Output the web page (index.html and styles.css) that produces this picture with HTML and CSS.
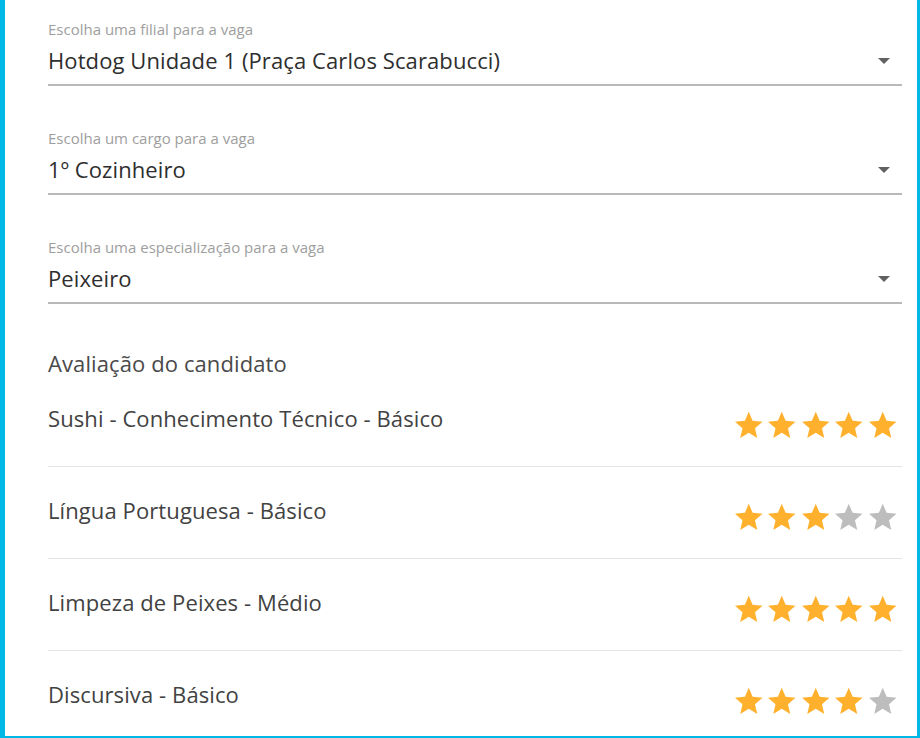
FILE: index.html
```html
<!DOCTYPE html>
<html lang="pt-BR">
<head>
<meta charset="utf-8">
<title>Vaga</title>
<link rel="stylesheet" href="styles.css">
</head>
<body>
<div class="frame">
  <div class="field">
    <div class="label">Escolha uma filial para a vaga</div>
    <div class="select"><span class="value">Hotdog Unidade 1 (Praça Carlos Scarabucci)</span><span class="arrow"></span></div>
  </div>
  <div class="field">
    <div class="label">Escolha um cargo para a vaga</div>
    <div class="select"><span class="value">1º Cozinheiro</span><span class="arrow"></span></div>
  </div>
  <div class="field">
    <div class="label">Escolha uma especialização para a vaga</div>
    <div class="select"><span class="value">Peixeiro</span><span class="arrow"></span></div>
  </div>

  <h2 class="section-title">Avaliação do candidato</h2>

  <div class="rows">
    <div class="row">
      <span class="skill">Sushi - Conhecimento Técnico - Básico</span>
      <div class="stars">
        <svg class="star on" viewBox="0 0 24 24"><path d="M12 17.27L18.18 21l-1.64-7.03L22 9.24l-7.19-.61L12 2 9.19 8.63 2 9.24l5.46 4.73L5.82 21z"/></svg>
        <svg class="star on" viewBox="0 0 24 24"><path d="M12 17.27L18.18 21l-1.64-7.03L22 9.24l-7.19-.61L12 2 9.19 8.63 2 9.24l5.46 4.73L5.82 21z"/></svg>
        <svg class="star on" viewBox="0 0 24 24"><path d="M12 17.27L18.18 21l-1.64-7.03L22 9.24l-7.19-.61L12 2 9.19 8.63 2 9.24l5.46 4.73L5.82 21z"/></svg>
        <svg class="star on" viewBox="0 0 24 24"><path d="M12 17.27L18.18 21l-1.64-7.03L22 9.24l-7.19-.61L12 2 9.19 8.63 2 9.24l5.46 4.73L5.82 21z"/></svg>
        <svg class="star on" viewBox="0 0 24 24"><path d="M12 17.27L18.18 21l-1.64-7.03L22 9.24l-7.19-.61L12 2 9.19 8.63 2 9.24l5.46 4.73L5.82 21z"/></svg>
      </div>
    </div>
    <div class="row">
      <span class="skill">Língua Portuguesa - Básico</span>
      <div class="stars">
        <svg class="star on" viewBox="0 0 24 24"><path d="M12 17.27L18.18 21l-1.64-7.03L22 9.24l-7.19-.61L12 2 9.19 8.63 2 9.24l5.46 4.73L5.82 21z"/></svg>
        <svg class="star on" viewBox="0 0 24 24"><path d="M12 17.27L18.18 21l-1.64-7.03L22 9.24l-7.19-.61L12 2 9.19 8.63 2 9.24l5.46 4.73L5.82 21z"/></svg>
        <svg class="star on" viewBox="0 0 24 24"><path d="M12 17.27L18.18 21l-1.64-7.03L22 9.24l-7.19-.61L12 2 9.19 8.63 2 9.24l5.46 4.73L5.82 21z"/></svg>
        <svg class="star off" viewBox="0 0 24 24"><path d="M12 17.27L18.18 21l-1.64-7.03L22 9.24l-7.19-.61L12 2 9.19 8.63 2 9.24l5.46 4.73L5.82 21z"/></svg>
        <svg class="star off" viewBox="0 0 24 24"><path d="M12 17.27L18.18 21l-1.64-7.03L22 9.24l-7.19-.61L12 2 9.19 8.63 2 9.24l5.46 4.73L5.82 21z"/></svg>
      </div>
    </div>
    <div class="row">
      <span class="skill">Limpeza de Peixes - Médio</span>
      <div class="stars">
        <svg class="star on" viewBox="0 0 24 24"><path d="M12 17.27L18.18 21l-1.64-7.03L22 9.24l-7.19-.61L12 2 9.19 8.63 2 9.24l5.46 4.73L5.82 21z"/></svg>
        <svg class="star on" viewBox="0 0 24 24"><path d="M12 17.27L18.18 21l-1.64-7.03L22 9.24l-7.19-.61L12 2 9.19 8.63 2 9.24l5.46 4.73L5.82 21z"/></svg>
        <svg class="star on" viewBox="0 0 24 24"><path d="M12 17.27L18.18 21l-1.64-7.03L22 9.24l-7.19-.61L12 2 9.19 8.63 2 9.24l5.46 4.73L5.82 21z"/></svg>
        <svg class="star on" viewBox="0 0 24 24"><path d="M12 17.27L18.18 21l-1.64-7.03L22 9.24l-7.19-.61L12 2 9.19 8.63 2 9.24l5.46 4.73L5.82 21z"/></svg>
        <svg class="star on" viewBox="0 0 24 24"><path d="M12 17.27L18.18 21l-1.64-7.03L22 9.24l-7.19-.61L12 2 9.19 8.63 2 9.24l5.46 4.73L5.82 21z"/></svg>
      </div>
    </div>
    <div class="row">
      <span class="skill">Discursiva - Básico</span>
      <div class="stars">
        <svg class="star on" viewBox="0 0 24 24"><path d="M12 17.27L18.18 21l-1.64-7.03L22 9.24l-7.19-.61L12 2 9.19 8.63 2 9.24l5.46 4.73L5.82 21z"/></svg>
        <svg class="star on" viewBox="0 0 24 24"><path d="M12 17.27L18.18 21l-1.64-7.03L22 9.24l-7.19-.61L12 2 9.19 8.63 2 9.24l5.46 4.73L5.82 21z"/></svg>
        <svg class="star on" viewBox="0 0 24 24"><path d="M12 17.27L18.18 21l-1.64-7.03L22 9.24l-7.19-.61L12 2 9.19 8.63 2 9.24l5.46 4.73L5.82 21z"/></svg>
        <svg class="star on" viewBox="0 0 24 24"><path d="M12 17.27L18.18 21l-1.64-7.03L22 9.24l-7.19-.61L12 2 9.19 8.63 2 9.24l5.46 4.73L5.82 21z"/></svg>
        <svg class="star off" viewBox="0 0 24 24"><path d="M12 17.27L18.18 21l-1.64-7.03L22 9.24l-7.19-.61L12 2 9.19 8.63 2 9.24l5.46 4.73L5.82 21z"/></svg>
      </div>
    </div>
  </div>
</div>
</body>
</html>
```

FILE: styles.css
```css
* { box-sizing: border-box; }
html, body {
  margin: 0;
  padding: 0;
  background: #ffffff;
}
body {
  width: 920px;
  height: 738px;
  overflow: hidden;
  font-family: "Open Sans", "Noto Sans", sans-serif;
}
.frame {
  height: 738px;
  border-left: 5px solid #00b8e6;
  border-right: 3px solid #00b8e6;
  border-bottom: 2px solid #00b8e6;
  padding: 0 15px 0 43px;
  overflow: hidden;
}
.field {
  padding-top: 19px;
}
.field + .field {
  padding-top: 42px;
}
.label {
  font-size: 15px;
  line-height: 20px;
  color: #9e9e9e;
}
.select {
  display: flex;
  align-items: center;
  justify-content: space-between;
  margin-top: 6px;
  padding-bottom: 9px;
  border-bottom: 2px solid #b9b9b9;
}
.value {
  font-size: 22px;
  line-height: 30px;
  letter-spacing: 0.1px;
  color: #2e2e2e;
}
.arrow {
  width: 0;
  height: 0;
  margin-right: 12px;
  margin-top: 2px;
  border-left: 6px solid transparent;
  border-right: 6px solid transparent;
  border-top: 6px solid #616161;
}
.section-title {
  margin: 44px 0 0;
  font-size: 22px;
  line-height: 30px;
  font-weight: 400;
  letter-spacing: 0.1px;
  color: #4a4a4a;
}
.row {
  display: flex;
  justify-content: space-between;
  align-items: flex-start;
  padding: 28px 0 24px;
  border-bottom: 1px solid #e4e4e4;
}
.row:first-child {
  padding-top: 25px;
}
.row:last-child {
  border-bottom: none;
}
.skill {
  font-size: 22px;
  line-height: 30px;
  letter-spacing: 0.1px;
  color: #424242;
}
.stars {
  display: flex;
  margin-top: 6px;
  margin-right: 3px;
}
.star {
  width: 33.5px;
  height: 33px;
  display: block;
}
.star.on { fill: #ffb12e; }
.star.off { fill: #bdbdbd; }
```
